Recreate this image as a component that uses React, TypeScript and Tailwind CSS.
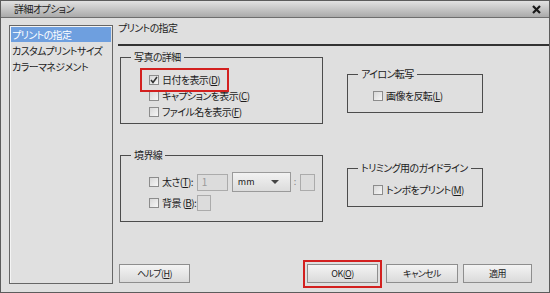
import type { ReactNode } from 'react';

const font = { fontFamily: '"Noto Sans CJK JP", "Noto Sans", sans-serif', fontFeatureSettings: '"palt"' };

function Box({ checked = false }: { checked?: boolean }) {
  return (
    <span className="mr-[3px] inline-flex h-[10px] w-[10px] shrink-0 items-center justify-center border border-[#8c8c8c] bg-gradient-to-br from-[#d8d8d8] to-[#f6f6f6]">
      {checked && (
        <svg width="8" height="8" viewBox="0 0 8 8">
          <path d="M1 4 L3 6.5 L7 1" fill="none" stroke="#333" strokeWidth="1.6" />
        </svg>
      )}
    </span>
  );
}

function Check({ label, keyChar, checked = false }: { label: string; keyChar: string; checked?: boolean }) {
  return (
    <div className="flex h-[16px] items-center">
      <Box checked={checked} />
      <span>
        {label}(<span className="underline">{keyChar}</span>)
      </span>
    </div>
  );
}

function Group({ title, className, children }: { title: string; className: string; children: ReactNode }) {
  return (
    <fieldset className={`border border-[#4c4c4c] p-0 ${className}`}>
      <legend className="ml-[10px] px-[3px] leading-[14px]">{title}</legend>
      {children}
    </fieldset>
  );
}

function Button({ children, className = '' }: { children: ReactNode; className?: string }) {
  return (
    <button
      className={`flex h-[19px] items-center justify-center border border-[#8e8e8e] bg-gradient-to-b from-[#f4f4f4] to-[#dadada] text-[9px] leading-none text-[#222] ${className}`}
      type="button"
    >
      {children}
    </button>
  );
}

export default function App() {
  return (
    <div
      className="flex h-[293px] w-[550px] flex-col whitespace-nowrap border border-[#5c5c5c] bg-[#dfdfdf] text-[10px] leading-[14px] tracking-[-0.6px] text-[#1c1c1c]"
      style={font}
    >
      <div className="flex h-[17px] shrink-0 items-center justify-between border-b border-[#6e6e6e] bg-gradient-to-b from-[#e2e2e2] to-[#aaaaaa] pl-[13px] pr-[8px]">
        <span>詳細オプション</span>
        <svg width="9" height="9" viewBox="0 0 9 9">
          <path d="M1 1 L8 8 M8 1 L1 8" stroke="#1a1a1a" strokeWidth="2.2" />
        </svg>
      </div>

      <div className="flex flex-1">
        <aside className="ml-[8px] mt-[7px] h-[259px] w-[104px] shrink-0 border border-[#666] bg-[#e0e0e0] p-[1px] shadow-[inset_1px_1px_0_#f4f4f4]">
          <div className="flex h-[15px] items-center bg-[#6e9fdf] pl-[1px] text-white">プリントの指定</div>
          <div className="flex h-[17px] items-center pl-[1px]">カスタムプリントサイズ</div>
          <div className="flex h-[16px] items-center pl-[1px]">カラーマネジメント</div>
        </aside>

        <section className="ml-[5px] flex flex-1 flex-col">
          <p className="pt-[3px]">プリントの指定</p>
          <div className="mt-[9px] h-[2px] bg-[#333]" />

          <div className="ml-[2px] mt-[4px] grid grid-cols-[203px_136px] gap-x-[24px] gap-y-[24px]">
            <Group title="写真の詳細" className="h-[74px]">
              <div className="pl-[28px] pt-[8px]">
                <div className="relative">
                  <span className="absolute -left-[9px] -top-[4px] h-[24px] w-[89px] border-2 border-[#d3201f]" />
                  <Check label="日付を表示" keyChar="D" checked />
                </div>
                <Check label="キャプションを表示" keyChar="C" />
                <Check label="ファイル名を表示" keyChar="F" />
              </div>
            </Group>

            <Group title="アイロン転写" className="mt-[17px] h-[46px]">
              <div className="pl-[25px] pt-[7px]">
                <Check label="画像を反転" keyChar="L" />
              </div>
            </Group>

            <Group title="境界線" className="h-[74px]">
              <div className="pl-[28px] pt-[10px]">
                <div className="flex h-[20px] items-center">
                  <Box />
                  <span className="mr-[4px]">
                    太さ(<span className="underline">T</span>):
                  </span>
                  <span className="flex h-[17px] w-[31px] items-center border border-[#ababab] bg-[#dcdcdc] pl-[4px] text-[#9a9a9a]">1</span>
                  <span className="ml-[4px] flex h-[20px] w-[59px] items-center justify-between border border-[#9a9a9a] bg-gradient-to-b from-[#f2f2f2] to-[#dcdcdc] pl-[5px] pr-[11px] text-[9px] tracking-normal">
                    mm
                    <span className="h-0 w-0 border-x-[4px] border-t-[4px] border-x-transparent border-t-[#444]" />
                  </span>
                  <span className="ml-[3px] w-[6px] text-[9px] text-[#888]">:</span>
                  <span className="h-[17px] w-[15px] border border-[#ababab] bg-[#dcdcdc]" />
                </div>
                <div className="mt-[3px] flex h-[16px] items-center">
                  <Box />
                  <span className="mr-[1px]">
                    背景 (<span className="underline">B</span>):
                  </span>
                  <span className="h-[16px] w-[14px] border border-[#ababab] bg-[#dcdcdc]" />
                </div>
              </div>
            </Group>

            <Group title="トリミング用のガイドライン" className="mt-[13px] h-[46px]">
              <div className="pl-[25px] pt-[7px]">
                <Check label="トンボをプリント" keyChar="M" />
              </div>
            </Group>
          </div>

          <div className="mt-[38px] flex items-start">
            <Button className="ml-[1px] mt-[4px] w-[71px]">
              ヘルプ(<span className="underline">H</span>)
            </Button>
            <div className="ml-[113px] border-2 border-[#d3201f] p-[2px] pb-[3px]">
              <Button className="w-[71px]">
                OK(<span className="underline">O</span>)
              </Button>
            </div>
            <Button className="ml-[4px] mt-[4px] w-[72px]">キャンセル</Button>
            <Button className="ml-[5px] mt-[4px] w-[69px]">適用</Button>
          </div>
        </section>
      </div>
    </div>
  );
}
